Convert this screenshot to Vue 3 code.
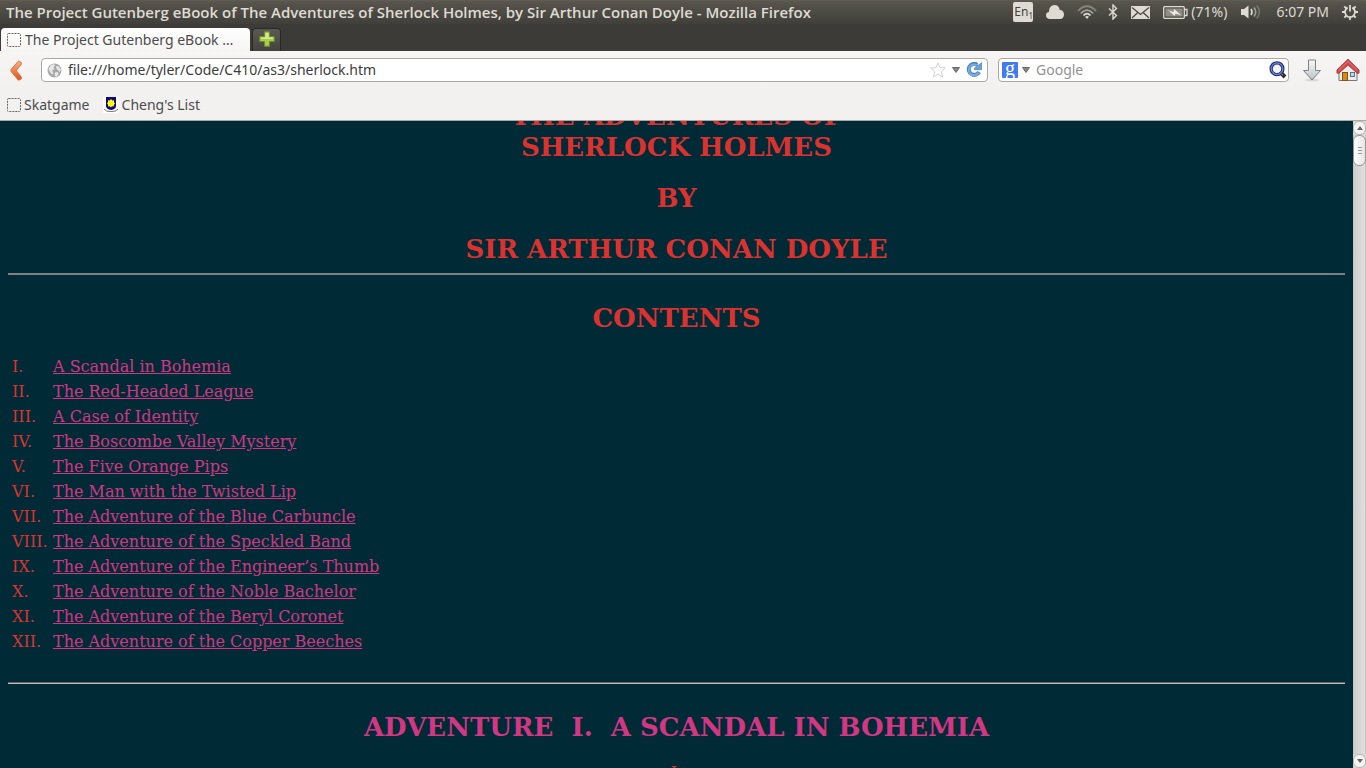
<script setup>
const chapters = [
  ['I.', 'A Scandal in Bohemia'],
  ['II.', 'The Red-Headed League'],
  ['III.', 'A Case of Identity'],
  ['IV.', 'The Boscombe Valley Mystery'],
  ['V.', 'The Five Orange Pips'],
  ['VI.', 'The Man with the Twisted Lip'],
  ['VII.', 'The Adventure of the Blue Carbuncle'],
  ['VIII.', 'The Adventure of the Speckled Band'],
  ['IX.', 'The Adventure of the Engineer’s Thumb'],
  ['X.', 'The Adventure of the Noble Bachelor'],
  ['XI.', 'The Adventure of the Beryl Coronet'],
  ['XII.', 'The Adventure of the Copper Beeches'],
]
</script>

<template>
  <div class="screen">
    <header class="panel">
      <span class="title">The Project Gutenberg eBook of The Adventures of Sherlock Holmes, by Sir Arthur Conan Doyle - Mozilla Firefox</span>
      <div class="tray">
        <button class="lang" aria-label="Keyboard layout">En<sub>1</sub></button>
        <button class="t-cloud" aria-label="Cloud">
          <svg width="20" height="16" viewBox="0 0 20 16"><path d="M5 15C2.500 15 1 13.500 1 11.400C1 9.500 2.200 8.200 4 8C3.900 4 6 1 9.500 1C12.700 1 14.500 3 14.700 6C17.500 6 19 8 19 10.500C19 13.200 17.500 15 15 15Z" fill="#dfdbd2" /></svg>
        </button>
        <button class="t-wifi" aria-label="Network">
          <svg width="20" height="16" viewBox="0 0 20 16" fill="none" stroke-width="1.800"><path d="M1 7Q10 -2.500 19 7" stroke="#87847b" /><path d="M3.800 9.300Q10 2.800 16.200 9.300" stroke="#a5a299" /><path d="M6.500 11.500Q10 7.800 13.500 11.500" stroke="#dfdbd2" /><path d="M8 12.800Q10 11 12 12.800L10 15Z" fill="#dfdbd2" /></svg>
        </button>
        <button class="t-bt" aria-label="Bluetooth">
          <svg width="10" height="16" viewBox="0 0 10 16" fill="none" stroke="#dfdbd2" stroke-width="1.400"><path d="M1 4.500L8.500 11.500L5 15V1L8.500 4.500L1 11.500" /></svg>
        </button>
        <button class="t-mail" aria-label="Messages">
          <svg width="19" height="13" viewBox="0 0 19 13"><path d="M0 0H19V13H0Z" fill="#dfdbd2" /><path d="M1 1.500L9.500 8.500L18 1.500M1 12L6.800 6.500M18 12L12.200 6.500" fill="none" stroke="#4a4842" stroke-width="1.300" /></svg>
        </button>
        <button class="t-battery">
          <svg width="25" height="13" viewBox="0 0 25 13"><rect x=".7" y=".7" width="20.600" height="11.600" rx="1" fill="none" stroke="#dfdbd2" stroke-width="1.300" /><rect x="2.500" y="2.500" width="17" height="8" fill="#8f8d85" /><path d="M22 3.500H24V9.500H22" fill="none" stroke="#dfdbd2" stroke-width="1.300" /><path d="M5 4L10.500 6.200L11 3L18.500 9.500L12.500 7.500L11.500 10Z" fill="#f1eee7" /></svg>
          <span>(71%)</span>
        </button>
        <button class="t-sound" aria-label="Volume">
          <svg width="22" height="16" viewBox="0 0 22 16"><path d="M1 5H4L8.500 1.500V14.500L4 11H1Z" fill="#dfdbd2" /><g fill="none" stroke-width="1.600"><path d="M11 5Q13 8 11 11" stroke="#dfdbd2" /><path d="M14 3.500Q17.500 8 14 12.500" stroke="#a19f96" /><path d="M16.800 1.500Q22 8 16.800 14.500" stroke="#77746c" /></g></svg>
        </button>
        <button class="t-clock">6:07 PM</button>
        <button class="t-gear" aria-label="System">
          <svg width="16" height="16" viewBox="0 0 16 16" fill="none" stroke="#dfdbd2"><path d="M5.700 3.600A5 5 0 1 0 10.300 3.600" stroke-width="1.800" /><path d="M8 1V7.500" stroke-width="1.800" /><path d="M3 8H0M13 8H16M8 13V16M4.500 11.500L2.300 13.700M11.500 11.500L13.700 13.700M4.500 4.500L2.300 2.300M11.500 4.500L13.700 2.300" stroke-width="1.800" /></svg>
        </button>
      </div>
    </header>

    <nav class="tabs">
      <button class="tab">
        <svg width="14" height="14" viewBox="0 0 14 14"><rect x=".5" y=".5" width="13" height="13" rx="1" fill="none" stroke="#666" stroke-dasharray="2 1" /></svg>
        <span>The Project Gutenberg eBook …</span>
      </button>
      <button class="new-tab" aria-label="Open a new tab">
        <svg width="16" height="16" viewBox="0 0 16 16"><path d="M5.500 .7H10.500V5.500H15.300V10.500H10.500V15.300H5.500V10.500H.7V5.500H5.500Z" fill="#a8cc45" stroke="#6b8b35" /><path d="M6.500 2H9.500V6.500H14V8H2V6.500H6.500Z" fill="#d5e995" /></svg>
      </button>
    </nav>

    <div class="toolbar">
      <button class="back" aria-label="Back">
        <svg width="12" height="21" viewBox="0 0 12 21"><defs><linearGradient id="orange" x2="0" y2="1"><stop stop-color="#f5b27c" /><stop offset="1" stop-color="#e3501b" /></linearGradient></defs><path d="M8.500 1L11.300 2.500V4.500L6.300 10.500L11.300 17V19L8.500 20.300L1 11.500V9.500Z" fill="url(#orange)" stroke="#d1683b" stroke-width=".8" stroke-linejoin="round" /></svg>
      </button>
      <div class="field url">
        <svg width="15" height="15" viewBox="0 0 15 15"><circle cx="7.500" cy="7.500" r="7" fill="#a8a8a8" /><path d="M1.500 6L4 2L7 1L8 2.500L6.500 4.500L7.500 6L5 7.500L6.500 10L5 11.500L3 9ZM9 3L12 3.500L14 7L12.500 9L11 7L9.500 6ZM8 9.500L11 9L11.500 11.500L9 14L7.500 12Z" fill="#e7e7e7" /></svg>
        <input type="text" aria-label="Address" value="file:///home/tyler/Code/C410/as3/sherlock.htm" />
        <button class="star" aria-label="Bookmark this page"><svg width="16" height="16" viewBox="0 0 16 16"><path d="M8 .8L10 5.600L15.300 6L11.300 9.500L12.500 15L8 12L3.500 15L4.700 9.500L.7 6L6 5.600Z" fill="#fff" stroke="#d2d2d2" /></svg></button>
        <button class="arrow" aria-label="Show history"><svg width="8" height="6" viewBox="0 0 8 6"><path d="M.5 .5H7.500L4 5.500Z" fill="#868686" stroke="#686868" /></svg></button>
        <button aria-label="Reload"><svg width="16" height="16" viewBox="0 0 16 16"><path d="M11.200 2.700A5.500 5.500 0 1 0 13.100 10" fill="none" stroke="#4c86bf" stroke-width="4" /><path d="M15.500 .7V7.700H8.500V6.200L10.500 4.500V3L13 3Z" fill="#6ba3d5" stroke="#4c86bf" stroke-width=".8" /><path d="M10.500 3.300A5.200 5.200 0 1 0 12.500 10.700" fill="none" stroke="#78acdb" stroke-width="2.300" /></svg></button>
      </div>
      <div class="field search">
        <button class="engine" aria-label="Choose search engine"><span>g</span><svg width="8" height="6" viewBox="0 0 8 6"><path d="M.5 .5H7.500L4 5.500Z" fill="#868686" stroke="#686868" /></svg></button>
        <input type="text" placeholder="Google" aria-label="Search" />
        <button aria-label="Search"><svg width="18" height="18" viewBox="0 0 18 18"><path d="M11 11L16 16" stroke="#302e2a" stroke-width="4" /><path d="M12 12.500L13.500 14" stroke="#aaa789" stroke-width="1.300" /><circle cx="8" cy="7.700" r="5.900" fill="#f4f6ff" stroke="#202d75" stroke-width="3.300" /><circle cx="8" cy="7.700" r="5.800" fill="none" stroke="#6884ca" stroke-width="1.300" /></svg></button>
      </div>
      <button class="download" aria-label="Downloads">
        <svg width="20" height="23" viewBox="0 0 20 23"><defs><linearGradient id="steel" x2="0" y2="1"><stop stop-color="#f8f9f9" /><stop offset="1" stop-color="#b9c4c7" /></linearGradient></defs><ellipse cx="10" cy="21" rx="7" ry="1.500" fill="#dad9d6" /><path d="M6.500 1H13.500V11.500H18.500L10 21L1.500 11.500H6.500Z" fill="url(#steel)" stroke="#7d8182" stroke-linejoin="round" /></svg>
      </button>
      <button class="home" aria-label="Home">
        <svg width="24" height="24" viewBox="0 0 24 24"><path d="M3 11L12 4L21 11V22.500H3Z" fill="#ededeb" stroke="#777" /><rect x="6.500" y="14.500" width="5" height="8" fill="#d68c18" stroke="#86510b" /><rect x="14.500" y="14.500" width="4" height="4" fill="#c0d6e5" stroke="#59758b" /><path d="M12 1.200L23 12V15L21.500 15.500L12 7L2.500 15.500L1 15V12Z" fill="#d34a4e" stroke="#b0383c" stroke-linejoin="round" /><path d="M2.500 12.500L12 3.200L21.500 12.500" fill="none" stroke="#e57476" /></svg>
      </button>
    </div>

    <nav class="bookmarks">
      <a href="#skatgame"><svg width="14" height="14" viewBox="0 0 14 14"><rect x=".5" y=".5" width="13" height="13" rx="1" fill="none" stroke="#666" stroke-dasharray="2 1" /></svg>Skatgame</a>
      <a href="#list"><svg width="16" height="16" viewBox="0 0 16 16"><path d="M0 0H16V16H0Z" fill="#fff" /><path d="M3 0H13V9Q13 12 8 13Q3 12 3 9Z" fill="#08088f" /><path d="M8 2L9.300 3.500L11 3.300L11 5L12 6.500L10.800 8L10.800 9.500L9 9.300L8 10.500L6.700 9.300L5 9.500L5 7.800L4 6.500L5 5L5 3.300L6.700 3.500Z" fill="#ff0" /><path d="M1 12Q3 15 8 14.500Q13 15 15 12" fill="none" stroke="#777" /></svg>Cheng's List</a>
    </nav>

    <div class="view">
      <main class="page">
        <h1>THE ADVENTURES OF<br />SHERLOCK HOLMES</h1>
        <h2>BY</h2>
        <h2>SIR ARTHUR CONAN DOYLE</h2>
        <hr class="first" />
        <h2 class="contents">CONTENTS</h2>
        <table>
          <tbody>
            <tr v-for="([num, name], i) in chapters" :key="num">
              <td>{{ num }}</td>
              <td><a :href="`#${i + 1}`">{{ name }}</a></td>
            </tr>
          </tbody>
        </table>
        <hr class="second" />
        <h2 class="chapter"><a href="#1">ADVENTURE&nbsp; I.&nbsp; A SCANDAL IN BOHEMIA</a></h2>
        <p>I.</p>
      </main>
      <div class="scrollbar">
        <button aria-label="Scroll up"><svg width="6" height="4" viewBox="0 0 6 4"><path d="M0 4L3 0L6 4Z" fill="#666" /></svg></button>
        <div class="track"><div class="thumb"><i></i><i></i><i></i></div></div>
        <button aria-label="Scroll down"><svg width="6" height="4" viewBox="0 0 6 4"><path d="M0 0L3 4L6 0Z" fill="#666" /></svg></button>
      </div>
    </div>
  </div>
</template>

<style>
body { margin: 0; overflow: hidden; }
</style>

<style scoped>
* { box-sizing: border-box; }
.screen {
  display: flex;
  flex-direction: column;
  height: 100vh;
  background: #f2f1f0;
  color: #4c4c4c;
  font: 14px/18px "Noto Sans", "Open Sans", sans-serif;
}
button {
  display: flex;
  align-items: center;
  padding: 0;
  border: 0;
  background: none;
  color: inherit;
  font: inherit;
}
svg { display: block; flex: none; }
input {
  flex: 1;
  min-width: 0;
  padding: 0;
  border: 0;
  outline: 0;
  background: none;
  color: #3c3c3c;
  font: inherit;
}
input::placeholder { color: #929292; opacity: 1; }

.panel {
  display: flex;
  align-items: center;
  height: 24px;
  padding: 0 8px 0 6px;
  background: linear-gradient(#615f53, #56544c 2px, #403f3a);
  color: #dfdbd2;
  white-space: nowrap;
}
.title { font-family: "Open Sans", "Noto Sans", sans-serif; font-size: 15px; font-weight: 600; }
.tray { display: flex; align-items: center; margin-left: auto; }
.lang {
  width: 20px;
  height: 20px;
  padding-left: 1px;
  border-radius: 2px;
  background: #dfdbd2;
  color: #45433d;
  font-size: 12px;
}
.lang sub { margin-top: 8px; font-size: 8px; line-height: 8px; }
.t-cloud { margin-left: 12px; }
.t-wifi { margin-left: 12px; }
.t-bt { margin-left: 11px; }
.t-mail { margin-left: 13px; }
.t-battery { gap: 3px; margin-left: 13px; }
.t-sound { margin-left: 13px; }
.t-clock { margin-left: 14px; }
.t-gear { margin-left: 13px; }

.tabs {
  display: flex;
  align-items: flex-end;
  gap: 2px;
  height: 27px;
  padding-left: 1px;
  background: #3c3b37;
}
.tab {
  gap: 4px;
  width: 249px;
  height: 23px;
  padding-left: 6px;
  border-radius: 4px 4px 0 0;
  background: linear-gradient(#fff, #f5f4f2);
  white-space: nowrap;
}
.new-tab {
  justify-content: center;
  width: 29px;
  height: 23px;
  padding-bottom: 2px;
  border: 1px solid #292825;
  border-bottom: 0;
  border-radius: 4px 4px 0 0;
  background: linear-gradient(#5a5953, #43423d);
}

.toolbar {
  display: flex;
  align-items: center;
  height: 38px;
  padding: 0 6px 0 10px;
  background: linear-gradient(#f6f5f4, #f2f1f0);
}
.field {
  display: flex;
  align-items: center;
  height: 24px;
  border: 1px solid #aaa8a4;
  border-radius: 4px;
  background: #fff;
}
.url { flex: 1; gap: 6px; margin-left: 19px; padding: 0 5px; }
.search { flex: 0 0 291px; gap: 6px; margin-left: 10px; padding: 0 1px 0 3px; }
.engine { gap: 4px; }
.engine span {
  width: 16px;
  height: 16px;
  border-radius: 1px;
  background: #4179f7;
  color: #fff;
  font: 400 20px/12px "Liberation Serif", serif;
  text-align: center;
}
.download { margin-left: 13px; }
.home { margin-left: 14px; }

.bookmarks {
  display: flex;
  align-items: center;
  gap: 13px;
  height: 32px;
  padding-left: 7px;
  border-bottom: 1px solid #aaa8a4;
}
.bookmarks a {
  display: flex;
  align-items: center;
  gap: 3px;
  color: inherit;
  text-decoration: none;
}

.view { display: flex; flex: 1; min-height: 0; }
.page {
  flex: 1;
  overflow: hidden;
  padding: 0 8px;
  background: #002b36;
  color: #dc322f;
  font: 16px/19px "DejaVu Serif", serif;
}
h1, h2 {
  margin: 20px 0 0;
  font-size: 26px;
  font-weight: 700;
  line-height: 31px;
  text-align: center;
}
h1 { margin-top: -20px; }
.page a { color: #d33682; }
hr { height: 2px; margin: 0; border: 0; }
.first { margin-top: 8px; background: #808080; }
.second { margin-top: 28px; border-top: 1px solid #6b625e; background: #c0bdba; }
.contents { margin-top: 28px; }
table { margin: 20px 0 0 2px; border-spacing: 2px 0; border-collapse: separate; }
td { height: 25px; padding: 0; }
td:first-child { width: 39px; }
.chapter { margin-top: 28px; }
.chapter a { text-decoration: none; }
p { margin: 20px 0 0; text-align: center; }

.scrollbar {
  display: flex;
  flex-direction: column;
  width: 13px;
  background: #d9d7d4;
}
.scrollbar button {
  justify-content: center;
  height: 14px;
  border: 1px solid #b8b5b1;
  border-radius: 6px;
  background: #f5f4f3;
}
.track { flex: 1; border: solid #c7c4c0; border-width: 0 1px; background: linear-gradient(90deg, #d0cecb, #e2e0de); }
.thumb {
  display: flex;
  flex-direction: column;
  align-items: center;
  justify-content: center;
  gap: 2px;
  height: 31px;
  margin: 0 -1px;
  border: 1px solid #999692;
  border-radius: 6px;
  background: linear-gradient(90deg, #fff, #e8e6e3);
}
.thumb i { width: 4px; height: 1px; background: #999; }
</style>
